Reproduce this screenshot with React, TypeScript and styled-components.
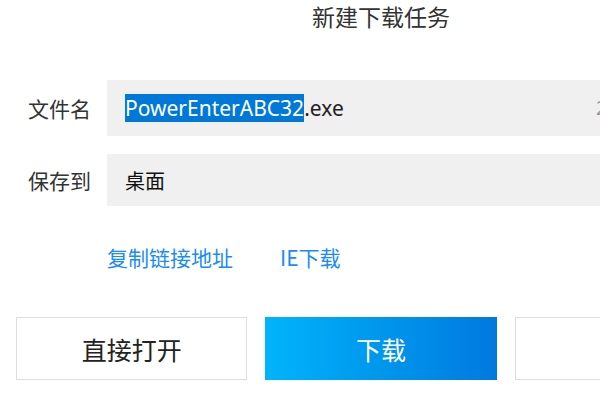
import React from 'react';
import styled, { createGlobalStyle } from 'styled-components';

const GlobalStyle = createGlobalStyle`
  html, body {
    margin: 0;
    padding: 0;
    background: #ffffff;
    overflow: hidden;
  }
  body {
    font-family: "Noto Sans", "Noto Sans CJK SC", sans-serif;
  }
`;

const Dialog = styled.div`
  width: 762px;
  height: 400px;
  display: flex;
  flex-direction: column;
  background: #ffffff;
`;

const Title = styled.div`
  height: 36px;
  text-align: center;
  font-family: "Noto Sans CJK SC", sans-serif;
  font-size: 23px;
  line-height: 32px;
  color: #333333;
`;

const Form = styled.div`
  display: flex;
  flex-direction: column;
  gap: 18px;
  padding: 44px 16px 0 28px;
`;

const Row = styled.div`
  display: flex;
  align-items: center;
`;

const Label = styled.div`
  width: 79px;
  font-family: "Noto Sans CJK SC", sans-serif;
  font-size: 21px;
  color: #333333;
`;

const Field = styled.div<{ $height: number }>`
  flex: 1;
  height: ${({ $height }) => $height}px;
  display: flex;
  align-items: center;
  padding: 0 16px 0 18px;
  background: #f0f0f0;
  font-size: 21px;
  color: #222222;
`;

const Selected = styled.span`
  background: #0078d7;
  color: #ffffff;
  line-height: 30px;
`;

const FileName = styled.div`
  flex: 1;
  white-space: nowrap;
  line-height: 30px;
`;

const Size = styled.span`
  width: 134px;
  font-size: 19px;
  color: #999999;
`;

const PlainValue = styled.span`
  font-family: "Noto Sans CJK SC", sans-serif;
  font-size: 20px;
  color: #111111;
`;

const Links = styled.div`
  display: flex;
  gap: 47px;
  padding: 36px 0 0 107px;
`;

const Link = styled.a`
  font-family: "Noto Sans CJK SC", sans-serif;
  font-size: 21px;
  color: #1a8cf5;
  text-decoration: none;
  cursor: pointer;
`;

const Buttons = styled.div`
  display: grid;
  grid-template-columns: repeat(3, 1fr);
  gap: 18px;
  padding: 45px 16px 0 16px;
`;

const Button = styled.button<{ $primary?: boolean }>`
  height: 63px;
  border: ${({ $primary }) => ($primary ? 'none' : '1px solid #dddddd')};
  background: ${({ $primary }) =>
    $primary ? 'linear-gradient(90deg, #00b4fb 0%, #0079df 100%)' : '#ffffff'};
  color: ${({ $primary }) => ($primary ? '#ffffff' : '#222222')};
  font-family: "Noto Sans CJK SC", sans-serif;
  font-size: 25px;
  cursor: pointer;
`;

export default function App() {
  return (
    <>
      <GlobalStyle />
      <Dialog>
        <Title>新建下载任务</Title>
        <Form>
          <Row>
            <Label>文件名</Label>
            <Field $height={56}>
              <FileName>
                <Selected>PowerEnterABC32</Selected>.exe
              </FileName>
              <Size>2.35MB</Size>
            </Field>
          </Row>
          <Row>
            <Label>保存到</Label>
            <Field $height={52}>
              <PlainValue>桌面</PlainValue>
            </Field>
          </Row>
        </Form>
        <Links>
          <Link>复制链接地址</Link>
          <Link>IE下载</Link>
        </Links>
        <Buttons>
          <Button>直接打开</Button>
          <Button $primary>下载</Button>
          <Button>取消</Button>
        </Buttons>
      </Dialog>
    </>
  );
}
